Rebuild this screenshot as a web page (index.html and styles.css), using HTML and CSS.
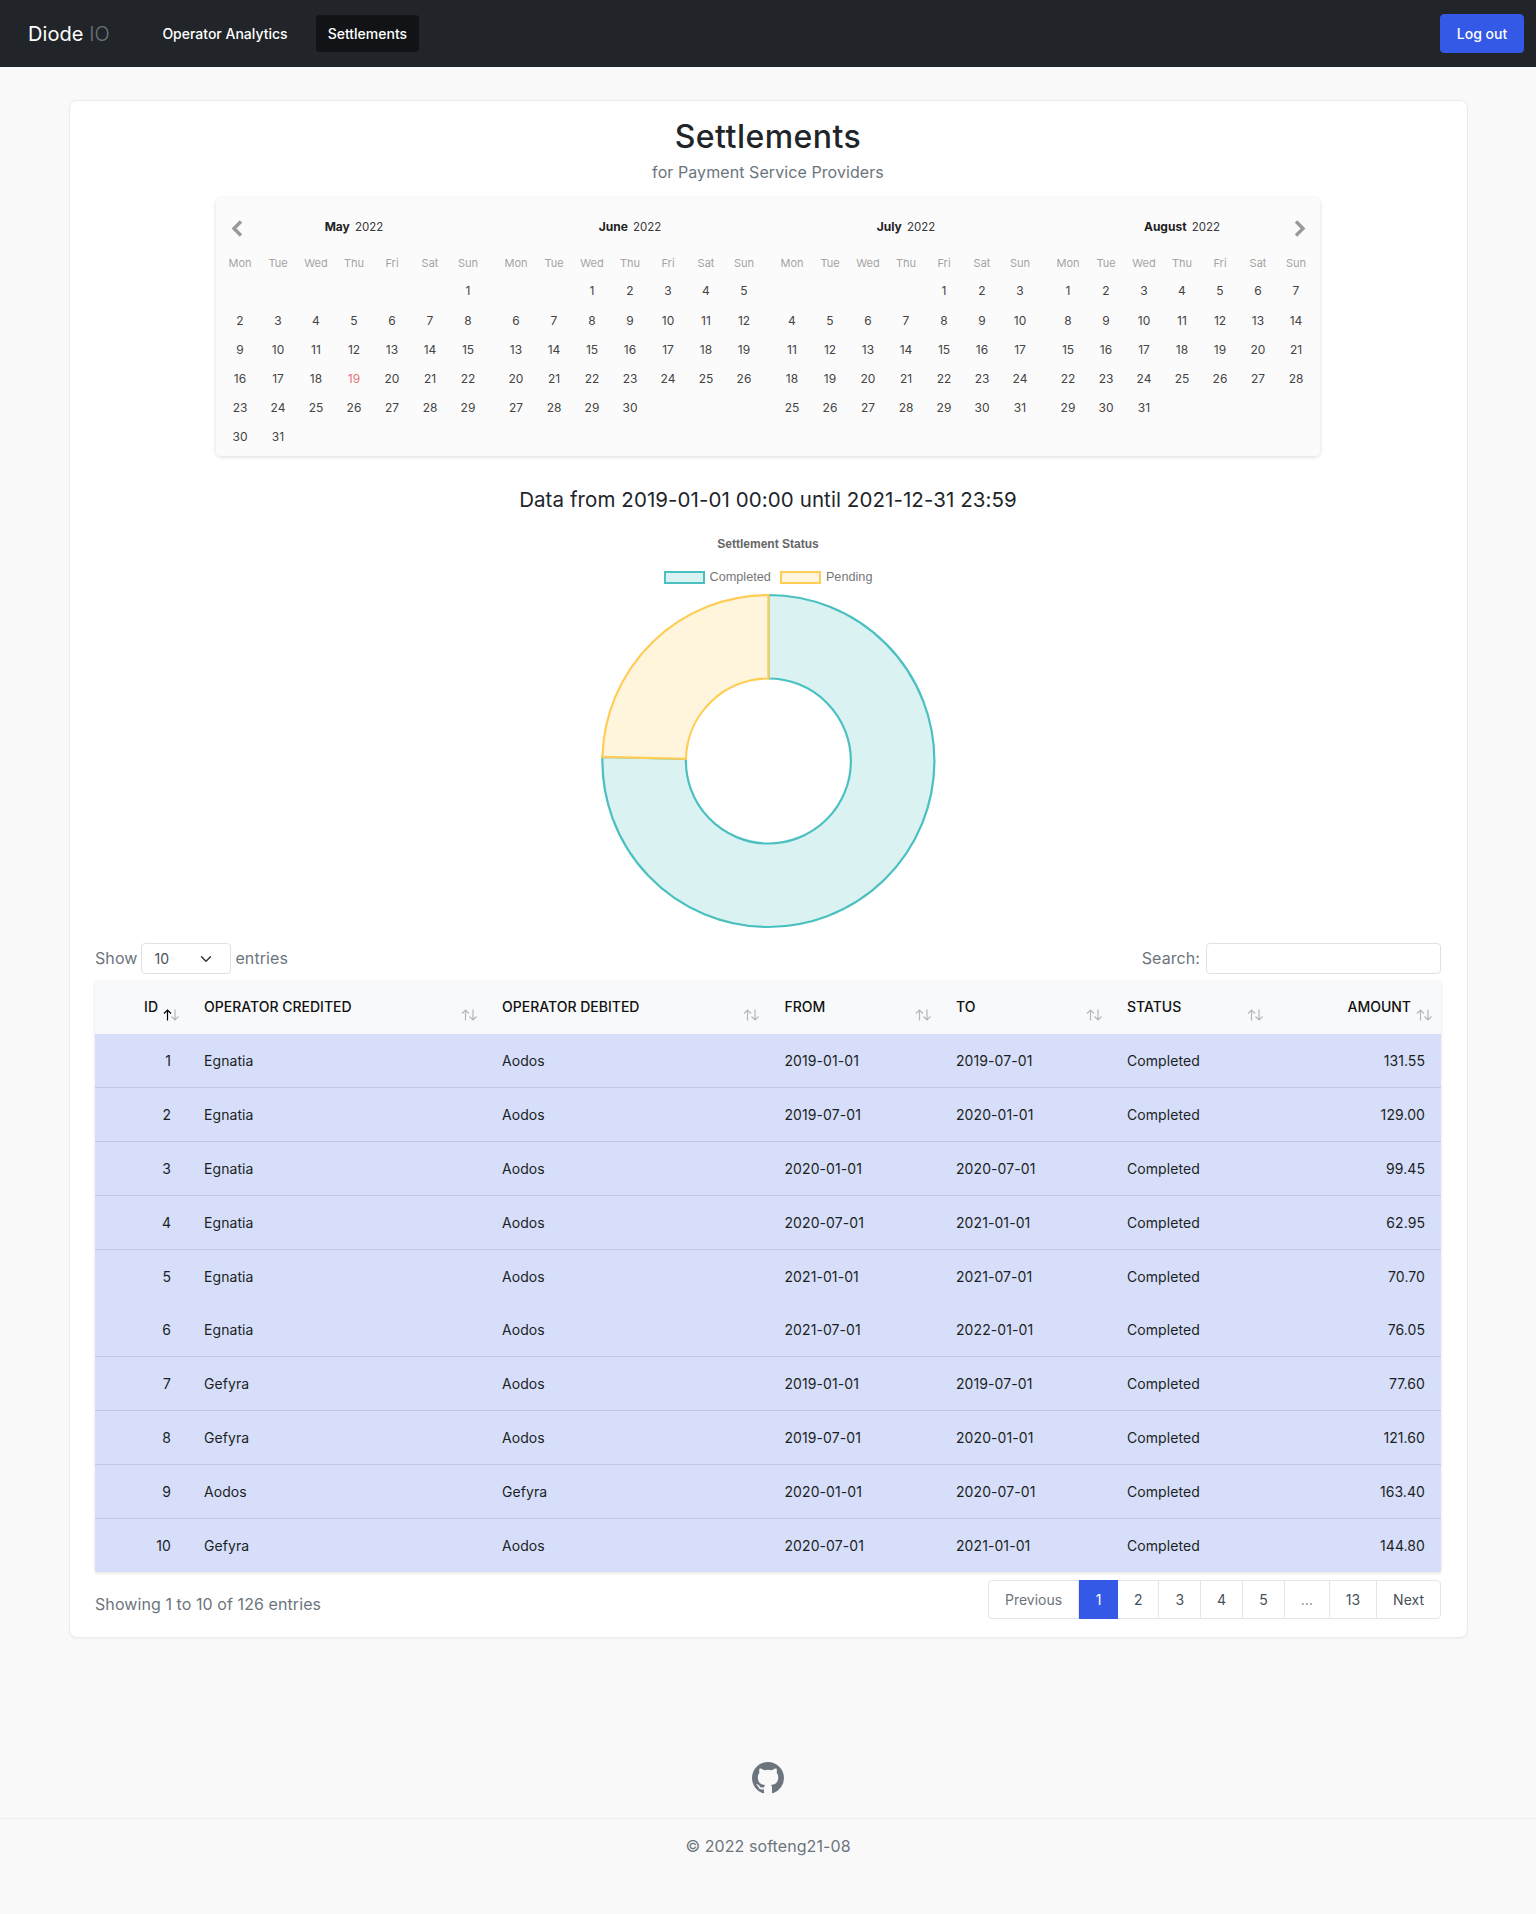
FILE: index.html
```html
<!DOCTYPE html>
<html lang="en">
<head>
<meta charset="utf-8">
<title>Settlements</title>
<link rel="stylesheet" href="styles.css">
</head>
<body>
<svg class="defs" width="0" height="0" aria-hidden="true">
  <symbol id="sort" viewBox="0 0 16 12"><path class="up" d="M4.5 11.5V1M1 4.5 4.5 1 8 4.5"/><path class="down" d="M12 .5V11M8.500 7.500 12 11l3.500-3.500"/></symbol>
  <symbol id="sort-asc" viewBox="0 0 16 12"><path class="down" d="M12 .5V11M8.500 7.500 12 11l3.500-3.500"/><path class="up-on" d="M4.500 11.500V1M1 4.500 4.500 1 8 4.500"/></symbol>
</svg>
<nav class="navbar">
  <a class="brand" href="#">Diode <span class="brand-io">IO</span></a>
  <ul class="nav-links">
    <li><a class="nav-link" href="#">Operator Analytics</a></li>
    <li><a class="nav-link active" href="#">Settlements</a></li>
  </ul>
  <button class="logout" type="button">Log out</button>
</nav>

<main class="card">
  <h1 class="title">Settlements</h1>
  <p class="subtitle">for Payment Service Providers</p>

  <section class="calendar">
    <svg class="cal-arrow prev" viewBox="0 0 12 17"><path d="M10 1.500 3 8.500l7 7"/></svg>
    <svg class="cal-arrow next" viewBox="0 0 12 17"><path d="M2 1.500 9 8.500l-7 7"/></svg>

    <div class="month">
      <div class="month-name"><b>May</b> 2022</div>
      <div class="days weekdays"><span>Mon</span><span>Tue</span><span>Wed</span><span>Thu</span><span>Fri</span><span>Sat</span><span>Sun</span></div>
      <div class="days">
        <span class="start-7">1</span><span>2</span><span>3</span><span>4</span><span>5</span><span>6</span><span>7</span><span>8</span><span>9</span><span>10</span><span>11</span><span>12</span><span>13</span><span>14</span><span>15</span><span>16</span><span>17</span><span>18</span><span class="today">19</span><span>20</span><span>21</span><span>22</span><span>23</span><span>24</span><span>25</span><span>26</span><span>27</span><span>28</span><span>29</span><span>30</span><span>31</span>
      </div>
    </div>
    <div class="month">
      <div class="month-name"><b>June</b> 2022</div>
      <div class="days weekdays"><span>Mon</span><span>Tue</span><span>Wed</span><span>Thu</span><span>Fri</span><span>Sat</span><span>Sun</span></div>
      <div class="days">
        <span class="start-3">1</span><span>2</span><span>3</span><span>4</span><span>5</span><span>6</span><span>7</span><span>8</span><span>9</span><span>10</span><span>11</span><span>12</span><span>13</span><span>14</span><span>15</span><span>16</span><span>17</span><span>18</span><span>19</span><span>20</span><span>21</span><span>22</span><span>23</span><span>24</span><span>25</span><span>26</span><span>27</span><span>28</span><span>29</span><span>30</span>
      </div>
    </div>
    <div class="month">
      <div class="month-name"><b>July</b> 2022</div>
      <div class="days weekdays"><span>Mon</span><span>Tue</span><span>Wed</span><span>Thu</span><span>Fri</span><span>Sat</span><span>Sun</span></div>
      <div class="days">
        <span class="start-5">1</span><span>2</span><span>3</span><span>4</span><span>5</span><span>6</span><span>7</span><span>8</span><span>9</span><span>10</span><span>11</span><span>12</span><span>13</span><span>14</span><span>15</span><span>16</span><span>17</span><span>18</span><span>19</span><span>20</span><span>21</span><span>22</span><span>23</span><span>24</span><span>25</span><span>26</span><span>27</span><span>28</span><span>29</span><span>30</span><span>31</span>
      </div>
    </div>
    <div class="month">
      <div class="month-name"><b>August</b> 2022</div>
      <div class="days weekdays"><span>Mon</span><span>Tue</span><span>Wed</span><span>Thu</span><span>Fri</span><span>Sat</span><span>Sun</span></div>
      <div class="days">
        <span>1</span><span>2</span><span>3</span><span>4</span><span>5</span><span>6</span><span>7</span><span>8</span><span>9</span><span>10</span><span>11</span><span>12</span><span>13</span><span>14</span><span>15</span><span>16</span><span>17</span><span>18</span><span>19</span><span>20</span><span>21</span><span>22</span><span>23</span><span>24</span><span>25</span><span>26</span><span>27</span><span>28</span><span>29</span><span>30</span><span>31</span>
      </div>
    </div>
  </section>

  <h2 class="range">Data from 2019-01-01 00:00 until 2021-12-31 23:59</h2>

  <section class="chart">
    <div class="chart-title">Settlement Status</div>
    <div class="legend">
      <span class="swatch swatch-completed"></span><span class="legend-label">Completed</span>
      <span class="swatch swatch-pending"></span><span class="legend-label">Pending</span>
    </div>
    <svg class="doughnut" width="340" height="340" viewBox="-0.4 0 340 340">
      <path class="seg-completed" d="M170 4A166 166 0 1 1 4.050 165.860L87.530 167.940A82.500 82.500 0 1 0 170 87.500Z"/>
      <path class="seg-pending" d="M4.050 165.860A166 166 0 0 1 170 4L170 87.500A82.500 82.500 0 0 0 87.530 167.940Z"/>
    </svg>
  </section>

  <div class="dt-top">
    <label class="dt-label">Show
      <select class="dt-select"><option>10</option></select>
      entries</label>
    <label class="dt-label">Search:
      <input class="dt-search" type="search">
    </label>
  </div>

  <table class="dt">
    <colgroup>
      <col class="c-id"><col class="c-cred"><col class="c-deb"><col class="c-from"><col class="c-to"><col class="c-status"><col class="c-amount">
    </colgroup>
    <thead>
      <tr>
        <th class="num id-head">ID<svg class="sort"><use href="#sort-asc"/></svg></th>
        <th>Operator Credited<svg class="sort"><use href="#sort"/></svg></th>
        <th>Operator Debited<svg class="sort"><use href="#sort"/></svg></th>
        <th>From<svg class="sort"><use href="#sort"/></svg></th>
        <th>To<svg class="sort"><use href="#sort"/></svg></th>
        <th>Status<svg class="sort"><use href="#sort"/></svg></th>
        <th class="num amount-head">Amount<svg class="sort"><use href="#sort"/></svg></th>
      </tr>
    </thead>
    <tbody>
      <tr><td class="num id-cell">1</td><td>Egnatia</td><td>Aodos</td><td>2019-01-01</td><td>2019-07-01</td><td>Completed</td><td class="num">131.55</td></tr>
      <tr><td class="num id-cell">2</td><td>Egnatia</td><td>Aodos</td><td>2019-07-01</td><td>2020-01-01</td><td>Completed</td><td class="num">129.00</td></tr>
      <tr><td class="num id-cell">3</td><td>Egnatia</td><td>Aodos</td><td>2020-01-01</td><td>2020-07-01</td><td>Completed</td><td class="num">99.45</td></tr>
      <tr><td class="num id-cell">4</td><td>Egnatia</td><td>Aodos</td><td>2020-07-01</td><td>2021-01-01</td><td>Completed</td><td class="num">62.95</td></tr>
      <tr class="no-line"><td class="num id-cell">5</td><td>Egnatia</td><td>Aodos</td><td>2021-01-01</td><td>2021-07-01</td><td>Completed</td><td class="num">70.70</td></tr>
      <tr><td class="num id-cell">6</td><td>Egnatia</td><td>Aodos</td><td>2021-07-01</td><td>2022-01-01</td><td>Completed</td><td class="num">76.05</td></tr>
      <tr><td class="num id-cell">7</td><td>Gefyra</td><td>Aodos</td><td>2019-01-01</td><td>2019-07-01</td><td>Completed</td><td class="num">77.60</td></tr>
      <tr><td class="num id-cell">8</td><td>Gefyra</td><td>Aodos</td><td>2019-07-01</td><td>2020-01-01</td><td>Completed</td><td class="num">121.60</td></tr>
      <tr><td class="num id-cell">9</td><td>Aodos</td><td>Gefyra</td><td>2020-01-01</td><td>2020-07-01</td><td>Completed</td><td class="num">163.40</td></tr>
      <tr class="no-line"><td class="num id-cell">10</td><td>Gefyra</td><td>Aodos</td><td>2020-07-01</td><td>2021-01-01</td><td>Completed</td><td class="num">144.80</td></tr>
    </tbody>
  </table>

  <div class="dt-bottom">
    <div class="dt-info">Showing 1 to 10 of 126 entries</div>
    <ul class="pager">
      <li class="page muted">Previous</li>
      <li class="page current">1</li>
      <li class="page">2</li>
      <li class="page">3</li>
      <li class="page">4</li>
      <li class="page">5</li>
      <li class="page muted">…</li>
      <li class="page">13</li>
      <li class="page">Next</li>
    </ul>
  </div>
</main>

<footer class="footer">
  <a class="gh" href="#" aria-label="GitHub">
    <svg width="32" height="32" viewBox="0 0 16 16"><path d="M8 0C3.580 0 0 3.580 0 8c0 3.540 2.290 6.530 5.470 7.590.400.070.550-.170.550-.380 0-.190-.010-.820-.010-1.490-2.010.370-2.530-.490-2.690-.940-.090-.230-.480-.940-.820-1.130-.280-.150-.680-.520-.010-.530.630-.010 1.080.580 1.230.820.720 1.210 1.870.870 2.330.660.070-.520.280-.870.510-1.070-1.780-.200-3.640-.890-3.640-3.950 0-.870.310-1.590.820-2.150-.080-.200-.360-1.020.080-2.120 0 0 .670-.210 2.200.820.640-.180 1.320-.270 2-.270s1.360.090 2 .270c1.530-1.040 2.200-.820 2.200-.820.440 1.100.160 1.920.080 2.120.510.560.820 1.270.820 2.150 0 3.070-1.870 3.750-3.650 3.950.290.250.540.730.540 1.480 0 1.070-.010 1.930-.010 2.200 0 .210.150.460.550.380A8.013 8.013 0 0 0 16 8c0-4.420-3.580-8-8-8z"/></svg>
  </a>
  <div class="copyright">© 2022 softeng21-08</div>
</footer>
</body>
</html>
```
FILE: styles.css
```css
* { box-sizing: border-box; }
html, body { margin: 0; padding: 0; }
body {
  background: #f9f9f9;
  color: #212529;
  font-family: Inter, "Liberation Sans", sans-serif;
  font-size: 16px;
  line-height: 1.5;
  letter-spacing: .08px;
}
.defs { position: absolute; }
a { text-decoration: none; color: inherit; }

/* navbar */
.navbar {
  height: 67px;
  background: #212529;
  display: flex;
  align-items: center;
  padding: 0 12px 0 28px;
  letter-spacing: 0;
}
.brand { color: #fff; font-size: 20px; line-height: 30px; letter-spacing: .08px; }
.brand-io { color: #6c757d; font-weight: 300; }
.nav-links {
  display: flex;
  list-style: none;
  margin: 0 0 0 40.500px;
  padding: 0;
  gap: 16px;
  flex: 1;
}
.nav-link {
  display: block;
  color: #fff;
  font-size: 14px;
  font-weight: 500;
  line-height: 21px;
  padding: 8px 12px;
  border-radius: 4px;
}
.nav-link.active { background: #111316; }
.logout {
  width: 84px;
  height: 39px;
  border: 1px solid #3459e6;
  border-radius: 4px;
  background: #3459e6;
  color: #fff;
  font: 500 14px/21px Inter, "Liberation Sans", sans-serif;
  padding: 0;
}

/* card */
.card {
  width: 1399px;
  height: 1538px;
  margin: 33px auto 0;
  background: #fff;
  border: 1px solid #e9ecef;
  border-radius: 8px;
  padding: 17px 25.500px 0;
  box-shadow: 0 1px 2px rgba(0,0,0,.04);
}
.title {
  font-size: 32px;
  font-weight: 500;
  line-height: 38.4px;
  text-align: center;
  letter-spacing: .45px;
  margin: 0;
}
.subtitle {
  color: #6c757d;
  text-align: center;
  margin: 4px 0 14px;
  line-height: 24px;
}

/* calendar */
.calendar {
  position: relative;
  width: 1104px;
  height: 258px;
  margin: 0 auto;
  background: #fbfbfb;
  border-radius: 5px;
  box-shadow: 0 1px 4px rgba(0,0,0,.14);
  display: flex;
  letter-spacing: 0;
}
.month { width: 276px; padding: 0 5px; }
.month-name {
  height: 52px;
  padding-top: 19px;
  text-align: center;
  font-size: 11.500px;
  line-height: 19px;
  color: #3a3a3a;
}
.month-name b { font-size: 12px; font-weight: 700; color: #222; margin-right: 2px; }
.days {
  display: grid;
  grid-template-columns: repeat(7, 38px);
  grid-auto-rows: 29.200px;
  font-size: 12px;
  color: #444;
  text-align: center;
  line-height: 29.200px;
}
.weekdays {
  grid-auto-rows: 26px;
  line-height: 26px;
  font-size: 11px;
  color: #a3a3a3;
}
.start-3 { grid-column-start: 3; }
.start-5 { grid-column-start: 5; }
.start-7 { grid-column-start: 7; }
.today { color: #e8717c; }
.cal-arrow {
  position: absolute;
  top: 22px;
  width: 12px;
  height: 17px;
  fill: none;
  stroke: #999;
  stroke-width: 3.400;
}
.cal-arrow.prev { left: 15px; }
.cal-arrow.next { right: 14px; }

/* chart */
.range {
  font-size: 20.500px;
  font-weight: 400;
  line-height: 24px;
  text-align: center;
  margin: 32px 0 25px;
}
.chart-title {
  font: 700 12px/14px "Liberation Sans", Arial, sans-serif;
  color: #666;
  text-align: center;
  letter-spacing: 0;
}
.legend {
  display: flex;
  justify-content: center;
  align-items: center;
  height: 14px;
  margin-top: 19px;
  font: 12.700px/14px "Liberation Sans", Arial, sans-serif;
  color: #777;
  letter-spacing: 0;
}
.swatch { width: 41px; height: 13px; border: 2px solid; margin-right: 5px; }
.swatch-completed { background: #dbf2f2; border-color: #4bc0c0; }
.swatch-pending { background: #fff5dd; border-color: #ffcd56; }
.legend-label { margin-right: 9px; }
.legend-label:last-child { margin-right: 0; }
.doughnut { display: block; margin: 6.500px auto -0.500px; }
.seg-completed { fill: #dbf2f2; stroke: #4bc0c0; stroke-width: 2.200; }
.seg-pending { fill: #fff5dd; stroke: #ffcd56; stroke-width: 2.200; }

/* data table */
.dt-top {
  display: flex;
  justify-content: space-between;
  height: 31px;
  margin-top: 13px;
}
.dt-label {
  display: flex;
  align-items: flex-start;
  gap: 4px;
  color: #6c757d;
  line-height: 30px;
}
.dt-select {
  appearance: none;
  width: 90px;
  height: 31px;
  border: 1px solid #dee2e6;
  border-radius: 4px;
  background: #fff url("data:image/svg+xml,%3Csvg xmlns='http://www.w3.org/2000/svg' viewBox='0 0 16 16'%3E%3Cpath fill='none' stroke='%23343a40' stroke-linecap='round' stroke-linejoin='round' stroke-width='2' d='m2 5 6 6 6-6'/%3E%3C/svg%3E") no-repeat right 18px center / 12px 12px;
  padding: 0 12px;
  font: 14px Inter, "Liberation Sans", sans-serif;
  color: #495057;
}
.dt-search {
  width: 235px;
  height: 31px;
  border: 1px solid #dee2e6;
  border-radius: 4px;
  background: #fff;
  margin-left: 2px;
}
.dt {
  width: 1346px;
  margin-top: 7px;
  border-collapse: separate;
  border-spacing: 0;
  table-layout: fixed;
  font-size: 14px;
  box-shadow: 0 1px 3px rgba(0,0,0,.12);
}
.c-id { width: 93px; }
.c-cred { width: 298px; }
.c-deb { width: 282.500px; }
.c-from { width: 171.500px; }
.c-to { width: 171px; }
.c-status { width: 161px; }
.c-amount { width: 169px; }
.dt th {
  position: relative;
  height: 53px;
  padding: 0 16px 3px;
  background: #f8f9fa;
  font-weight: 500;
  color: #111;
  text-align: left;
  text-transform: uppercase;
  white-space: nowrap;
  letter-spacing: 0;
}
.dt td {
  height: 53.800px;
  padding: 0 16px;
  background: #d6def9;
  color: #1c1f24;
  border-bottom: 1px solid #bfc8e3;
}
.dt .no-line td { border-bottom: 0; }
.dt .num { text-align: right; }
.dt .id-head { padding-right: 30px; }
.dt .id-cell { padding-right: 17px; }
.dt .amount-head { padding-right: 30px; }
.sort {
  position: absolute;
  right: 9.500px;
  top: 28px;
  width: 16px;
  height: 12px;
  fill: none;
  stroke-width: 1.200;
}
.up, .down { stroke: #b5b8bb; }
.up-on { stroke: #000; }

.dt-bottom {
  display: flex;
  justify-content: space-between;
  align-items: flex-start;
  margin-top: 8px;
}
.dt-info { color: #6c757d; padding-top: 12px; }
.pager {
  display: flex;
  list-style: none;
  margin: 0;
  padding: 0;
  border: 1px solid #e3e6ea;
  border-radius: 4px;
  font-size: 14px;
  color: #495057;
  height: 39px;
  background: #fff;
  letter-spacing: 0;
}
.page {
  padding: 0 16px;
  line-height: 37px;
  border-right: 1px solid #e3e6ea;
}
.page:last-child { border-right: 0; }
.page.muted { color: #6c757d; }
.page.current {
  background: #3459e6;
  color: #fff;
  margin: -1px 0;
  padding: 0 16.500px;
  height: 39px;
  line-height: 39px;
  border-right: 0;
}

/* footer */
.footer { margin-top: 124px; text-align: center; color: #6c757d; }
.gh { display: block; height: 32px; fill: #6c757d; }
.gh svg { display: block; margin: 0 auto; }
.copyright {
  margin-top: 24px;
  border-top: 1px solid #eceeef;
  padding-top: 15px;
  line-height: 24px;
}
```
